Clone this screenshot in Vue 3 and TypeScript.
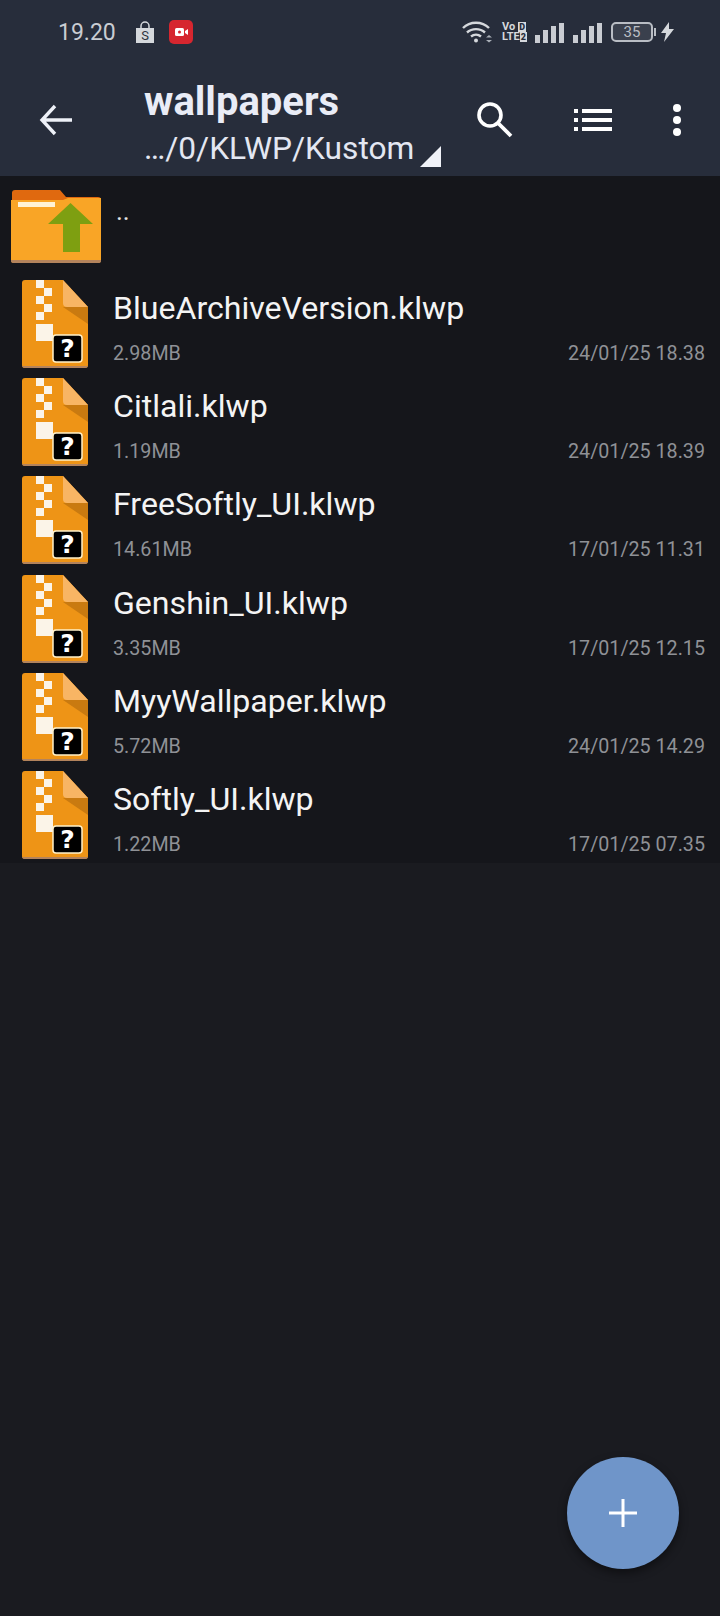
<template>
  <div class="screen">
    <header class="top">
      <div class="status">
        <span class="time">19.20</span>
        <svg class="shop" viewBox="0 0 20 22" width="20" height="22">
          <path d="M6 7V5a4 4 0 0 1 8 0v2" fill="none" stroke="#d5d8dc" stroke-width="1.5" />
          <path d="M1 7h18v15H1z" fill="#d5d8dc" />
          <text x="10" y="19" text-anchor="middle" font-size="13" fill="#2c3340" font-family="Roboto, sans-serif">S</text>
        </svg>
        <span class="rec">
          <svg viewBox="0 0 24 24" width="24" height="24">
            <rect x="0" y="0" width="24" height="24" rx="5" fill="#d6262f" />
            <rect x="6" y="8" width="9" height="8" rx="1.5" fill="#fff" />
            <path d="M16 11l3-2v6l-3-2z" fill="#fff" />
            <circle cx="10.5" cy="12" r="1.5" fill="#d6262f" />
          </svg>
        </span>
        <span class="spacer" />
        <svg class="wifi" viewBox="0 0 32 24" width="32" height="24">
          <path d="M1 8c7-7 19-7 26 0M5 12.500c5-4.500 13-4.500 18 0M9 16.500c3-2.500 7-2.500 10 0" fill="none" stroke="#d5d8dc" stroke-width="2.400" />
          <circle cx="14" cy="20.500" r="2" fill="#d5d8dc" />
          <path d="M27 15l3 2.500h-6zM24 20h6l-3 2.500z" fill="#aab0b8" />
        </svg>
        <div class="vol">
          <div>Vo<b>D</b></div>
          <div>LTE<b>2</b></div>
        </div>
        <div v-for="s in 2" :key="s" class="bars">
          <i v-for="h in barHeights" :key="h" :style="{ height: h + 'px' }" />
        </div>
        <div class="battery"><span>35</span></div>
        <svg class="bolt" viewBox="0 0 14 20" width="14" height="20">
          <path d="M8 0L0 11h5l-2 9 10-13H8z" fill="#d5d8dc" />
        </svg>
      </div>
      <div class="toolbar">
        <svg class="back" viewBox="0 0 34 34" width="34" height="34">
          <path d="M33 17H3M16 3L3 17l13 14" fill="none" stroke="#eef1f8" stroke-width="3.400" />
        </svg>
        <div class="titles">
          <div class="title">wallpapers</div>
          <div class="path">…/0/KLWP/Kustom<span class="corner" /></div>
        </div>
        <svg class="search" viewBox="0 0 36 36" width="36" height="36">
          <circle cx="13" cy="13" r="11" fill="none" stroke="#fff" stroke-width="3.600" />
          <path d="M21 21l13 13" stroke="#fff" stroke-width="3.800" />
        </svg>
        <svg class="listicon" viewBox="0 0 38 22" width="38" height="22">
          <path d="M0 0h4v4H0zM0 9h4v4H0zM0 18h4v4H0zM8 0h30v4H8zM8 9h30v4H8zM8 18h30v4H8z" fill="#fff" />
        </svg>
        <div class="dots"><i /><i /><i /></div>
      </div>
    </header>

    <div class="list">
      <div class="up">
        <svg class="folder" viewBox="0 0 90 74" width="90" height="74">
          <path d="M1 4a3 3 0 0 1 3-3h45l6 7h32a3 3 0 0 1 3 3v12H1z" fill="#e0690f" />
          <path d="M0 11h52l5-2h33v62a3 3 0 0 1-3 3H3a3 3 0 0 1-3-3z" fill="#f9a526" />
          <path d="M7 13h37v5H7z" fill="#fff3d6" />
          <path d="M0 71h90v.5a2.500 2.500 0 0 1-2.500 2.500h-85A2.500 2.500 0 0 1 0 71.500z" fill="#b3835c" />
          <path d="M59.500 14L82 35H69v28H52V35H37z" fill="#7e9f11" />
        </svg>
        <span class="dotdot">..</span>
      </div>
      <div class="rows">
        <div v-for="f in files" :key="f.name" class="row">
          <svg class="zip" viewBox="0 0 66 88" width="66" height="88">
            <path d="M3 0h38l25 27v58a3 3 0 0 1-3 3H3a3 3 0 0 1-3-3V3a3 3 0 0 1 3-3z" fill="#ee9416" />
            <path d="M41 0l25 27H45a4 4 0 0 1-4-4z" fill="#f8b564" />
            <path d="M41 27h25v17z" fill="#c97a10" />
            <path d="M14 0h8v8h-8zM22 8h8v8h-8zM14 16h8v8h-8zM22 24h8v8h-8zM14 32h8v8h-8zM14 44h17v17H14z" fill="#fbf4e8" />
            <path d="M0 86h66a3 3 0 0 1-3 2H3a3 3 0 0 1-3-2z" fill="#b3835c" />
            <rect x="31" y="55" width="29" height="27" rx="3" fill="#000" stroke="#fff1c9" stroke-width="1.500" />
            <text x="45.500" y="77" text-anchor="middle" font-size="25" font-weight="700" fill="#fff" font-family="'DejaVu Sans', sans-serif">?</text>
          </svg>
          <div class="info">
            <div class="name">{{ f.name }}</div>
            <div class="meta">
              <span>{{ f.size }}</span>
              <span>{{ f.date }}</span>
            </div>
          </div>
        </div>
      </div>
    </div>

    <button class="fab">
      <svg viewBox="0 0 30 30" width="30" height="30">
        <path d="M15 1v28M1 15h28" stroke="#fff" stroke-width="3" />
      </svg>
    </button>
  </div>
</template>

<script setup lang="ts">
const barHeights = [8, 13, 17, 20]

const files = [
  { name: 'BlueArchiveVersion.klwp', size: '2.98MB', date: '24/01/25 18.38' },
  { name: 'Citlali.klwp', size: '1.19MB', date: '24/01/25 18.39' },
  { name: 'FreeSoftly_UI.klwp', size: '14.61MB', date: '17/01/25 11.31' },
  { name: 'Genshin_UI.klwp', size: '3.35MB', date: '17/01/25 12.15' },
  { name: 'MyyWallpaper.klwp', size: '5.72MB', date: '24/01/25 14.29' },
  { name: 'Softly_UI.klwp', size: '1.22MB', date: '17/01/25 07.35' },
]
</script>

<style scoped>
.screen {
  position: relative;
  width: 720px;
  height: 1616px;
  overflow: hidden;
  background: #1a1b20;
  font-family: Roboto, sans-serif;
  color: #fff;
}

.top {
  height: 176px;
  background: #272d3b;
}

.status {
  display: flex;
  align-items: center;
  height: 64px;
  padding: 0 45px 0 58px;
  color: #c9ccd2;
}

.time {
  font-size: 23px;
  margin-right: 19px;
}

.shop {
  margin-right: 14px;
}

.rec {
  display: flex;
}

.spacer {
  flex: 1;
}

.wifi {
  margin-right: 8px;
}

.vol {
  width: 24px;
  margin-right: 9px;
  font-size: 11px;
  line-height: 10px;
  font-weight: 700;
  color: #d5d8dc;
  white-space: nowrap;
}

.vol div {
  display: flex;
  justify-content: space-between;
}

.vol b {
  padding: 0 1px;
  background: #d5d8dc;
  color: #272d3b;
  font-size: 9px;
}

.bars {
  display: flex;
  align-items: flex-end;
  gap: 3px;
  height: 21px;
  margin-right: 9px;
}

.bars i {
  width: 5px;
  background: #c9ccd2;
}

.battery {
  position: relative;
  width: 42px;
  height: 20px;
  box-sizing: border-box;
  margin-right: 8px;
  border: 2px solid #b9bdc4;
  border-radius: 5px;
  background: #3a404d;
  font-size: 15px;
  line-height: 16px;
  text-align: center;
  color: #b9bdc4;
}

.battery::after {
  content: '';
  position: absolute;
  right: -5px;
  top: 4px;
  width: 2px;
  height: 8px;
  background: #b9bdc4;
}

.toolbar {
  display: flex;
  align-items: center;
  height: 112px;
}

.back {
  margin-left: 39px;
  margin-right: 71px;
}

.titles {
  flex: 1;
  padding-top: 11px;
}

.title {
  font-size: 40px;
  line-height: 46px;
  font-weight: 700;
  color: #e9ecf6;
  margin-bottom: 1px;
}

.path {
  height: 46px;
  font-size: 31.700px;
  line-height: 46px;
  color: #e3e7f2;
  white-space: nowrap;
}

.corner {
  display: inline-block;
  width: 0;
  height: 0;
  margin-left: 6px;
  vertical-align: -8px;
  border-style: solid;
  border-width: 0 0 21px 21px;
  border-color: transparent transparent #f0f2f8 transparent;
}

.search {
  margin-right: 61px;
}

.listicon {
  margin-right: 61px;
}

.dots {
  display: flex;
  flex-direction: column;
  gap: 4px;
  margin-right: 39px;
}

.dots i {
  width: 8px;
  height: 8px;
  border-radius: 50%;
  background: #fff;
}

.list {
  background: #15161b;
  padding-bottom: 4px;
}

.up {
  display: flex;
  align-items: flex-start;
  height: 104px;
  padding: 13px 0 0 11px;
  box-sizing: border-box;
}

.folder {
  flex: none;
}

.dotdot {
  margin-left: 15px;
  font-size: 26px;
  line-height: 44px;
  color: #e4e4e4;
}

.rows {
  display: flex;
  flex-direction: column;
  gap: 10.200px;
}

.row {
  display: flex;
  height: 88px;
  padding-left: 22px;
  padding-right: 15px;
}

.zip {
  flex: none;
}

.info {
  flex: 1;
  margin-left: 25px;
}

.name {
  font-size: 32.100px;
  line-height: 40px;
  margin-top: 8px;
  color: #f4f4f4;
}

.meta {
  display: flex;
  justify-content: space-between;
  margin-top: 13px;
  font-size: 19.700px;
  line-height: 26px;
  color: #8f9196;
}

.fab {
  position: absolute;
  left: 567px;
  top: 1457px;
  width: 112px;
  height: 112px;
  padding: 0;
  border: none;
  border-radius: 50%;
  background: #6f95c9;
  box-shadow: 0 4px 10px rgba(0, 0, 0, 0.45);
  display: flex;
  align-items: center;
  justify-content: center;
}
</style>
